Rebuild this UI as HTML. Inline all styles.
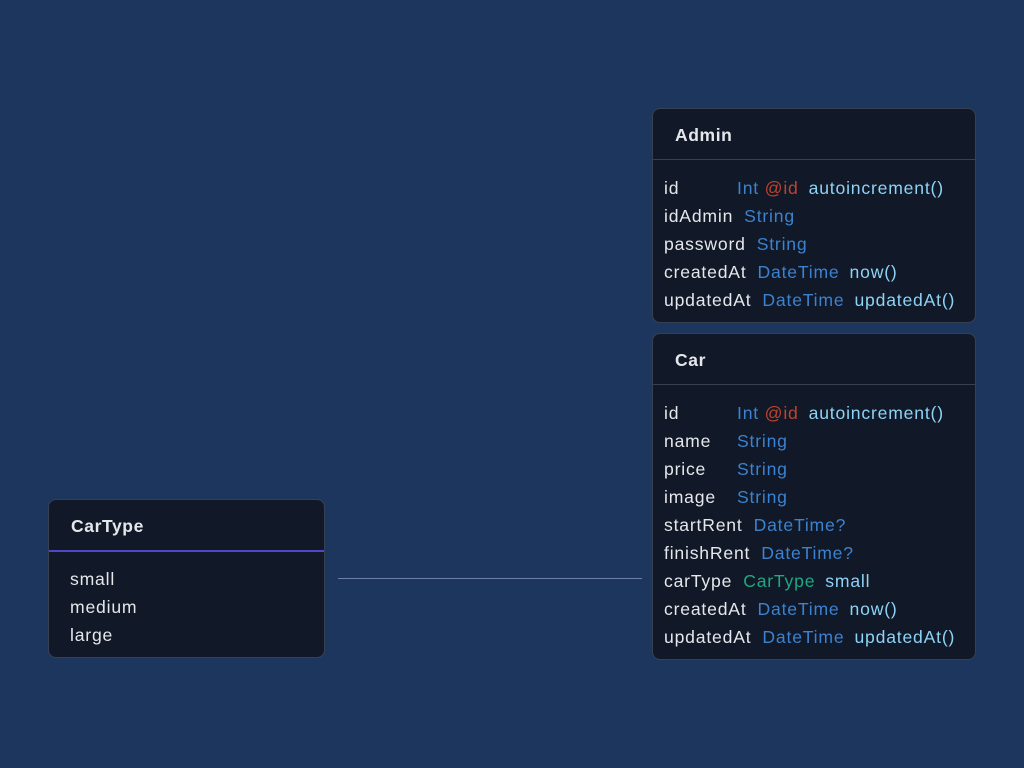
<!DOCTYPE html>
<html><head><meta charset="utf-8"><style>
body{margin:0;width:1024px;height:768px;background:#1c365d;font-family:"Liberation Sans",sans-serif;position:relative;overflow:hidden}
.card{position:absolute;background:#111827;border:1px solid #374151;border-radius:8px;box-sizing:border-box}
.hd{height:51px;border-bottom:1px solid #374151;box-sizing:border-box;padding-left:22px;font-weight:bold;font-size:17.5px;letter-spacing:0.6px;color:#e5e7eb;line-height:52px}
.rows{padding:14px 0 0 11px}
.r{height:28px;line-height:28px;font-size:17.6px;letter-spacing:0.8px;color:#e5e7eb;white-space:nowrap}
.n{display:inline-block;min-width:62px;margin-right:11px}
.t{color:#3b82d0}.a{color:#c0432e}.f{color:#8dd3f5;margin-left:10px}.g{color:#1fa883}
</style></head><body>
<div class="card" style="left:652px;top:108px;width:324px;height:215px">
<div class="hd">Admin</div>
<div class="rows">
<div class="r"><span class="n">id</span><span class="t">Int</span> <span class="a">@id</span><span class="f">autoincrement()</span></div>
<div class="r"><span class="n">idAdmin</span><span class="t">String</span></div>
<div class="r"><span class="n">password</span><span class="t">String</span></div>
<div class="r"><span class="n">createdAt</span><span class="t">DateTime</span><span class="f">now()</span></div>
<div class="r"><span class="n">updatedAt</span><span class="t">DateTime</span><span class="f">updatedAt()</span></div>
</div></div>
<div class="card" style="left:652px;top:333px;width:324px;height:327px">
<div class="hd">Car</div>
<div class="rows">
<div class="r"><span class="n">id</span><span class="t">Int</span> <span class="a">@id</span><span class="f">autoincrement()</span></div>
<div class="r"><span class="n">name</span><span class="t">String</span></div>
<div class="r"><span class="n">price</span><span class="t">String</span></div>
<div class="r"><span class="n">image</span><span class="t">String</span></div>
<div class="r"><span class="n">startRent</span><span class="t">DateTime?</span></div>
<div class="r"><span class="n">finishRent</span><span class="t">DateTime?</span></div>
<div class="r"><span class="n">carType</span><span class="g">CarType</span><span class="f">small</span></div>
<div class="r"><span class="n">createdAt</span><span class="t">DateTime</span><span class="f">now()</span></div>
<div class="r"><span class="n">updatedAt</span><span class="t">DateTime</span><span class="f">updatedAt()</span></div>
</div></div>
<div class="card" style="left:48px;top:499px;width:277px;height:159px">
<div class="hd" style="border-bottom:2px solid #4f46c8;height:52px">CarType</div>
<div class="rows" style="padding-left:21px;padding-top:13px">
<div class="r">small</div><div class="r">medium</div><div class="r">large</div>
</div></div>
<div style="position:absolute;left:338px;top:578px;width:304px;height:1px;background:#6b7fa8"></div>
</body></html>
